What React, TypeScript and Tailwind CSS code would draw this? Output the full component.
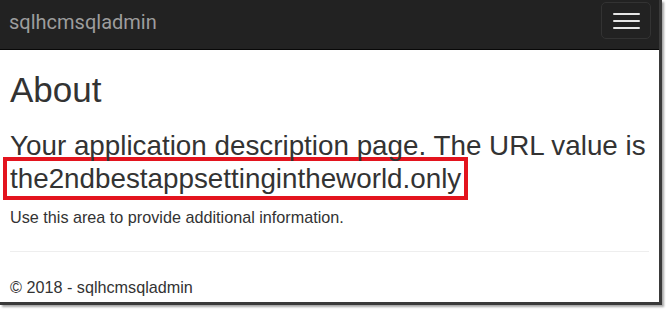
export default function App() {
  return (
    <div className="w-[666px] h-[310px] bg-white overflow-hidden" style={{ fontFamily: '"Liberation Sans", Arial, sans-serif' }}>
      <div className="w-[662px] h-[305px] border-r-[3px] border-b-[3px] border-[#3a3a3a] shadow-[2px_2px_2px_rgba(0,0,0,0.35)] flex flex-col">
        <div className="h-[50px] bg-[#222222] border-b border-[#080808] flex items-start justify-between shrink-0">
          <div className="pl-[9px] pt-[10px] text-[20px] leading-[24px] text-[#9d9d9d]" style={{ fontFamily: 'Roboto, "Liberation Sans", sans-serif' }}>sqlhcmsqladmin</div>
          <div className="mt-[2px] mr-[8px] w-[50px] h-[37px] border border-[#333] rounded-[5px] flex flex-col items-center justify-center gap-[5px]">
            <span className="block w-[27px] h-[2px] bg-[#e6e6e6] rounded-[1px]" />
            <span className="block w-[27px] h-[2px] bg-[#e6e6e6] rounded-[1px]" />
            <span className="block w-[27px] h-[2px] bg-[#e6e6e6] rounded-[1px]" />
          </div>
        </div>
        <div className="px-[10px] text-[#333333]">
          <h1 className="mt-[21px] text-[35px] leading-[38px]">About</h1>
          <div className="mt-[21px] text-[27.8px] leading-[31px]">
            <div className="whitespace-nowrap">Your application description page. The URL value is</div>
            <div className="-ml-[7px] -mt-[4px] block w-fit whitespace-nowrap border-4 border-[#e3141e] px-[3px] pt-[2px] pb-[2px]">the2ndbestappsettingintheworld.only</div>
          </div>
          <p className="mt-[7px] text-[16.2px] leading-[20px]">Use this area to provide additional information.</p>
          <hr className="mt-[24px] border-t border-[#eeeeee]" />
          <p className="mt-[25px] text-[16.2px] leading-[20px]">© 2018 - sqlhcmsqladmin</p>
        </div>
      </div>
    </div>
  );
}
